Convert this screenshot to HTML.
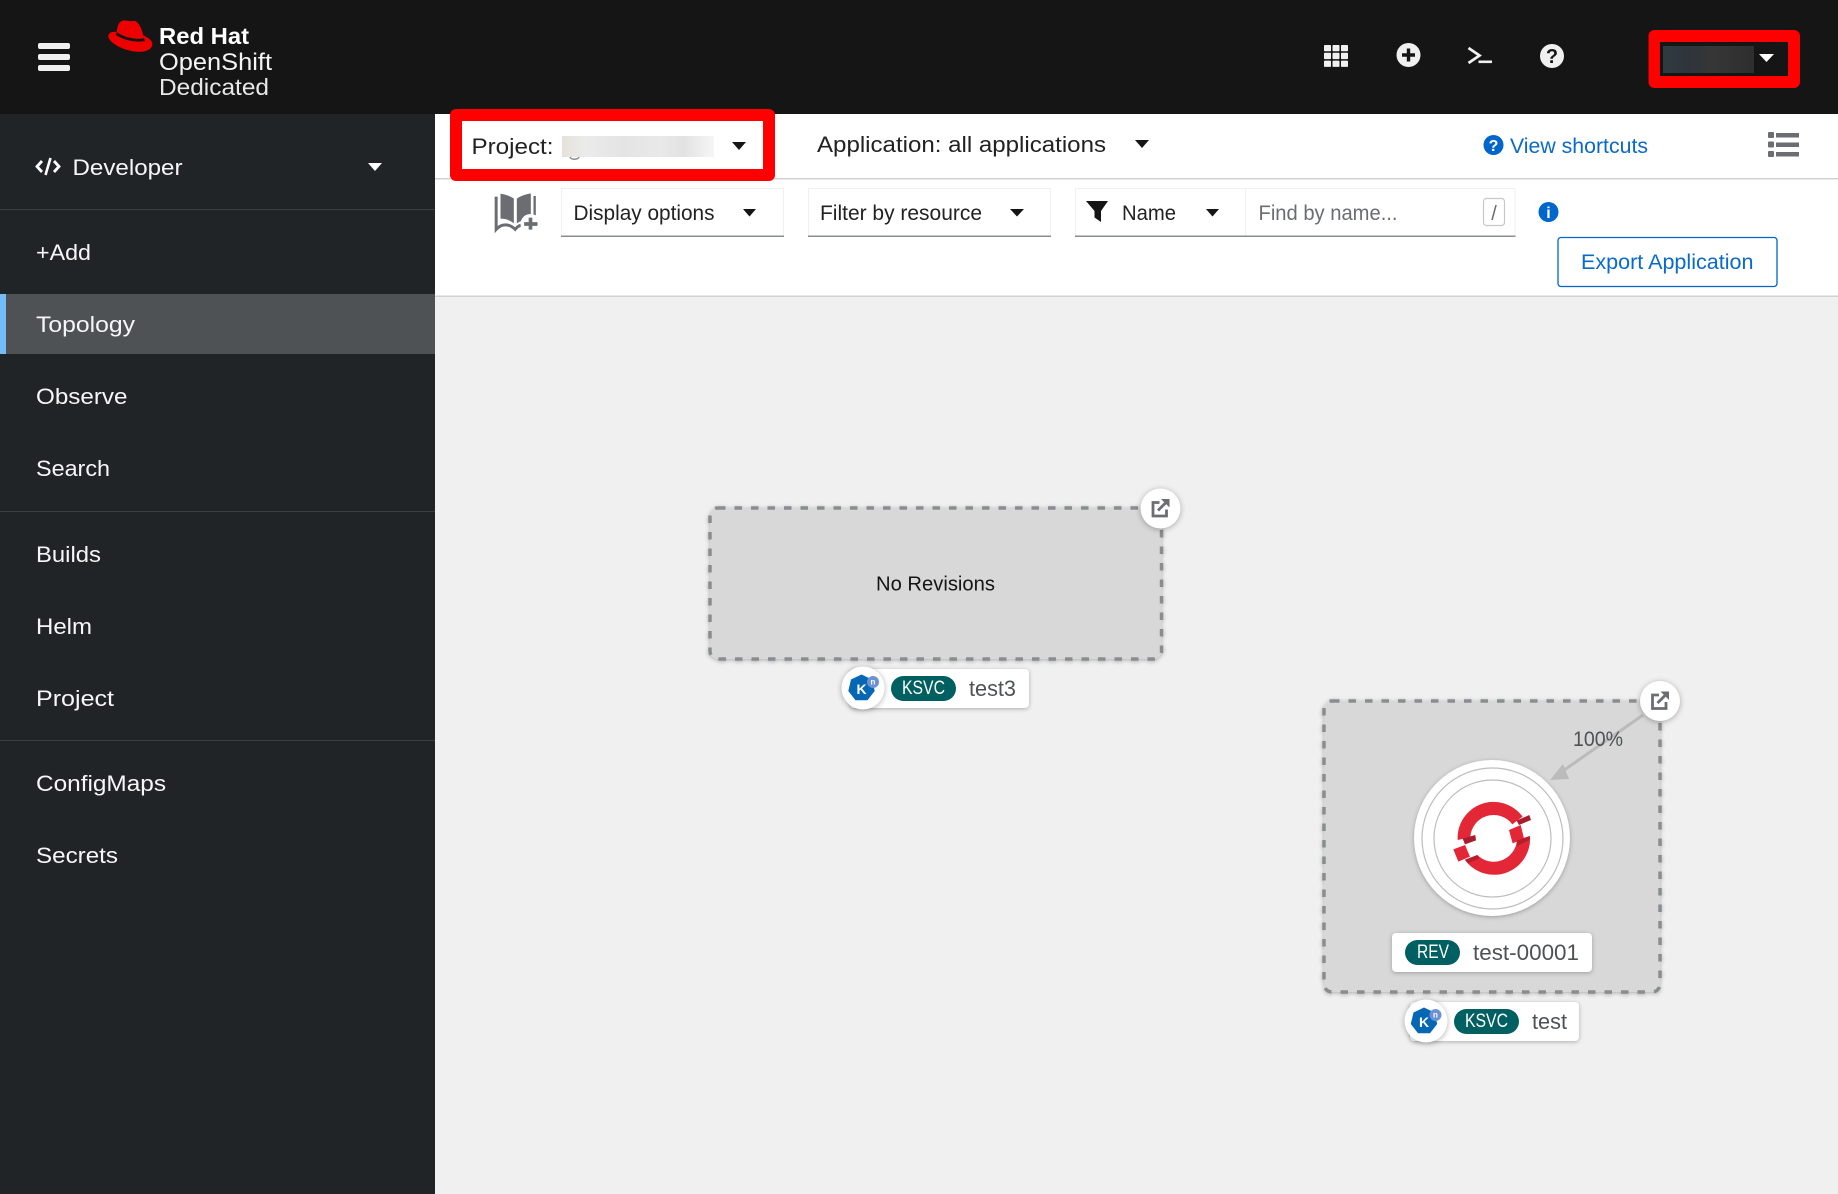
<!DOCTYPE html>
<html lang="en">
<head>
<meta charset="utf-8">
<title>Topology</title>
<style>
html,body{margin:0;padding:0;width:1838px;height:1194px;overflow:hidden;background:#f0f0f0}
svg{display:block;position:absolute;left:0;top:0}
text{font-family:"Liberation Sans",sans-serif}
.nav{fill:#f6f6f6;font-size:22.5px}
.tb{fill:#222;font-size:22.5px}
.sel{fill:#222;font-size:21px}
.blue{fill:#0a6acb;font-size:21.5px}
.pill{fill:#fff;font-size:19px}
.lbl{fill:#4f5255;font-size:22px}
.sh{filter:drop-shadow(0 1px 2px rgba(0,0,0,.28))}
.sh2{filter:drop-shadow(0 1px 3px rgba(0,0,0,.3))}
</style>
</head>
<body>
<svg width="1838" height="1194" viewBox="0 0 1838 1194" xmlns="http://www.w3.org/2000/svg">
<defs>
<linearGradient id="pg" x1="0" x2="1" y1="0" y2="0">
<stop offset="0" stop-color="#e6e0da"/><stop offset=".15" stop-color="#ebebeb"/><stop offset=".4" stop-color="#e4e4e4"/><stop offset=".65" stop-color="#e9e9e9"/><stop offset=".8" stop-color="#e2e2e2"/><stop offset="1" stop-color="#f6f6f6"/>
</linearGradient>
<linearGradient id="ug" x1="0" x2="1" y1="0" y2="0">
<stop offset="0" stop-color="#2e3b42"/><stop offset=".3" stop-color="#30343a"/><stop offset=".55" stop-color="#363636"/><stop offset="1" stop-color="#2e2e2e"/>
</linearGradient>
<g id="ext" fill="none" stroke="#6a6e73">
<path d="M8 3.500H1.500V17H15V10.500" stroke-width="2.800"/>
<path d="M6.500 11.500L15 3" stroke-width="2.800"/>
<path d="M9.500 0H18V8.500Z" fill="#6a6e73" stroke="none"/>
</g>
<g id="kn">
<polygon points="0,-13.500 10.500,-8.500 13.200,3 6,12.200 -6,12.200 -13.200,3 -10.500,-8.500" fill="#0667b5"/>
<text x="0" y="6" text-anchor="middle" font-size="14" font-weight="700" fill="#fff">K</text>
<circle cx="11.500" cy="-6" r="6" fill="#6c92d4"/>
<text x="11.500" y="-3.500" text-anchor="middle" font-size="8" font-weight="700" fill="#fff">n</text>
</g>
</defs>

<!-- backgrounds -->
<rect width="1838" height="1194" fill="#f0f0f0"/>
<rect x="435" y="114" width="1403" height="182" fill="#fff"/>
<rect x="435" y="178" width="1403" height="1.500" fill="#d2d2d2"/>
<rect x="435" y="295.500" width="1403" height="1.500" fill="#d2d2d2"/>

<!-- masthead -->
<rect width="1838" height="114" fill="#151515"/>
<g fill="#f0f0f0">
<rect x="38" y="43" width="32" height="6" rx="2"/>
<rect x="38" y="54" width="32" height="6" rx="2"/>
<rect x="38" y="65" width="32" height="6" rx="2"/>
</g>
<g transform="translate(100,10) scale(.3333)">
<path d="M62,35C72,27 88,36 100,33C113,30 124,52 130,76C147,84 158,92 157,104C156,120 132,128 108,125C70,122 25,98 25,78C25,68 38,63 50,66C52,52 55,40 62,35Z" fill="#ee0000"/>
<path d="M50,66C75,84 110,90 132,84L135,93C105,99 72,90 48,75Z" fill="#151515"/>
</g>
<text x="159" y="44" font-size="23" font-weight="700" fill="#fff" textLength="90" lengthAdjust="spacingAndGlyphs">Red Hat</text>
<text x="159" y="70" font-size="24" fill="#f4f4f4" textLength="113" lengthAdjust="spacingAndGlyphs">OpenShift</text>
<text x="159" y="95" font-size="23" fill="#e8e8e8" textLength="110" lengthAdjust="spacingAndGlyphs">Dedicated</text>

<!-- masthead icons -->
<g fill="#f0f0f0">
<rect x="1324" y="45" width="7" height="6.300" rx=".8"/><rect x="1332.500" y="45" width="7" height="6.300" rx=".8"/><rect x="1341" y="45" width="7" height="6.300" rx=".8"/>
<rect x="1324" y="52.800" width="7" height="6.300" rx=".8"/><rect x="1332.500" y="52.800" width="7" height="6.300" rx=".8"/><rect x="1341" y="52.800" width="7" height="6.300" rx=".8"/>
<rect x="1324" y="60.600" width="7" height="6.300" rx=".8"/><rect x="1332.500" y="60.600" width="7" height="6.300" rx=".8"/><rect x="1341" y="60.600" width="7" height="6.300" rx=".8"/>
<circle cx="1408.500" cy="55" r="12"/>
<circle cx="1552" cy="56" r="12"/>
</g>
<path d="M1402 55h13M1408.500 48.500v13" stroke="#151515" stroke-width="3.400"/>
<path d="M1468.500 48L1479.500 55.500L1468.500 63" fill="none" stroke="#f0f0f0" stroke-width="2.800"/>
<rect x="1478.500" y="60.500" width="13.500" height="2.600" fill="#f0f0f0"/>
<text x="1552" y="63" text-anchor="middle" font-size="20" font-weight="700" fill="#151515">?</text>

<!-- user redaction -->
<rect x="1648.500" y="30" width="151.500" height="58" rx="6" fill="#ff0000"/>
<rect x="1660" y="42" width="128" height="34" fill="#151515"/>
<rect x="1663" y="46" width="91" height="27" fill="url(#ug)"/>
<path d="M1759 54H1774L1766.500 62Z" fill="#fff"/>

<!-- sidebar -->
<rect x="0" y="114" width="435" height="1080" fill="#212427"/>
<rect x="0" y="209" width="435" height="1" fill="#3c3f42"/>
<rect x="0" y="511" width="435" height="1" fill="#3c3f42"/>
<rect x="0" y="740" width="435" height="1" fill="#3c3f42"/>
<rect x="0" y="294" width="435" height="60" fill="#4f5255"/>
<rect x="0" y="294" width="6" height="60" fill="#73bcf7"/>
<path d="M42 161L37 166.500L42 172M54 161L59 166.500L54 172" fill="none" stroke="#fff" stroke-width="2.800"/>
<path d="M50.500 158L45.500 175" fill="none" stroke="#fff" stroke-width="2.600"/>
<text class="nav" x="72.500" y="175" textLength="110" lengthAdjust="spacingAndGlyphs">Developer</text>
<path d="M368 163H382L375 171Z" fill="#fff"/>
<text class="nav" x="36" y="260" textLength="55" lengthAdjust="spacingAndGlyphs">+Add</text>
<text class="nav" x="36" y="332" textLength="99" lengthAdjust="spacingAndGlyphs">Topology</text>
<text class="nav" x="36" y="404" textLength="91.500" lengthAdjust="spacingAndGlyphs">Observe</text>
<text class="nav" x="36" y="476" textLength="74" lengthAdjust="spacingAndGlyphs">Search</text>
<text class="nav" x="36" y="562" textLength="65" lengthAdjust="spacingAndGlyphs">Builds</text>
<text class="nav" x="36" y="634" textLength="56" lengthAdjust="spacingAndGlyphs">Helm</text>
<text class="nav" x="36" y="706" textLength="78" lengthAdjust="spacingAndGlyphs">Project</text>
<text class="nav" x="36" y="791" textLength="130" lengthAdjust="spacingAndGlyphs">ConfigMaps</text>
<text class="nav" x="36" y="863" textLength="82" lengthAdjust="spacingAndGlyphs">Secrets</text>

<!-- project bar -->
<rect x="450" y="109" width="325" height="72" rx="6" fill="#ff0000"/>
<rect x="462" y="121" width="301" height="48" fill="#fff"/>
<text class="tb" x="471.500" y="154" textLength="82" lengthAdjust="spacingAndGlyphs">Project:</text>
<rect x="562" y="136" width="152" height="21" fill="url(#pg)"/>
<path d="M570 157c1 3 8 3 9 0" fill="none" stroke="#8a8d90" stroke-width="1.400"/>
<path d="M732 142H746L739 150Z" fill="#151515"/>
<text class="tb" x="817" y="152" textLength="289" lengthAdjust="spacingAndGlyphs">Application: all applications</text>
<path d="M1135 140H1149L1142 148Z" fill="#151515"/>
<circle cx="1493.500" cy="145" r="10" fill="#0066cc"/>
<text x="1493.500" y="151" text-anchor="middle" font-size="16" font-weight="700" fill="#fff">?</text>
<text class="blue" x="1510" y="153" textLength="138" lengthAdjust="spacingAndGlyphs">View shortcuts</text>
<g fill="#6a6e73">
<rect x="1768" y="132" width="6" height="6" rx="1"/><rect x="1776" y="133" width="23" height="4.500"/>
<rect x="1768" y="141.500" width="6" height="6" rx="1"/><rect x="1776" y="142.500" width="23" height="4.500"/>
<rect x="1768" y="151" width="6" height="6" rx="1"/><rect x="1776" y="152" width="23" height="4.500"/>
</g>

<!-- toolbar row -->
<g transform="translate(480.500,180) scale(.3333)">
<path d="M60,41C76,44 91,49 100,56V130C88,120 74,116 60,116Z" fill="#6a6e73"/>
<path d="M109,56C119,48 135,43 151,40V118C134,118 120,122 109,130Z" fill="#6a6e73"/>
<path d="M47,50V148C65,128 88,132 104,148C112,138 122,134 132,134" fill="none" stroke="#6a6e73" stroke-width="9"/>
<rect x="159" y="48" width="7" height="58" fill="#6a6e73"/>
<circle cx="150" cy="132" r="30" fill="#fff"/>
<path d="M131,132H171M150,113V149" stroke="#6a6e73" stroke-width="11"/>
</g>
<rect x="561.500" y="188.500" width="222" height="48" fill="#fff" stroke="#f0f0f0"/>
<rect x="561" y="235.500" width="223" height="1.500" fill="#8a8d90"/>
<text class="sel" x="573.500" y="220" textLength="141" lengthAdjust="spacingAndGlyphs">Display options</text>
<path d="M743 209H756L749.500 216.500Z" fill="#151515"/>
<rect x="808.500" y="188.500" width="242" height="48" fill="#fff" stroke="#f0f0f0"/>
<rect x="808" y="235.500" width="243" height="1.500" fill="#8a8d90"/>
<text class="sel" x="820" y="220" textLength="162" lengthAdjust="spacingAndGlyphs">Filter by resource</text>
<path d="M1010 209H1024L1017 216.500Z" fill="#151515"/>
<rect x="1075.500" y="188.500" width="439.500" height="48" fill="#fff" stroke="#f0f0f0"/>
<rect x="1245" y="188" width="1" height="48" fill="#f0f0f0"/>
<rect x="1075" y="235.500" width="440.500" height="1.500" fill="#8a8d90"/>
<path d="M1086 201H1108L1101 211V222L1094.500 217.500V211Z" fill="#151515"/>
<text class="sel" x="1122" y="220" textLength="54" lengthAdjust="spacingAndGlyphs">Name</text>
<path d="M1206 209H1219L1212.500 216.500Z" fill="#151515"/>
<text class="sel" x="1258.500" y="220" textLength="139" lengthAdjust="spacingAndGlyphs" style="fill:#6a6e73">Find by name...</text>
<rect x="1483.500" y="198.500" width="21" height="27" rx="3" fill="#fff" stroke="#c6c7c8" stroke-width="1.200"/>
<text x="1494" y="220" text-anchor="middle" font-size="20" fill="#6a6e73">/</text>
<circle cx="1548.500" cy="212" r="10" fill="#0066cc"/>
<text x="1548.500" y="218" text-anchor="middle" font-size="16" font-weight="700" fill="#fff">i</text>
<rect x="1558" y="237.500" width="219" height="49" rx="3" fill="#fff" stroke="#0066cc" stroke-width="1.300"/>
<text class="blue" x="1581" y="269" textLength="172.500" lengthAdjust="spacingAndGlyphs">Export Application</text>

<!-- node: test3 -->
<rect class="sh" x="710" y="508" width="451.500" height="151" rx="8" fill="#d8d8d8" stroke="#8a8d90" stroke-width="3.500" stroke-dasharray="7.500 9"/>
<text x="876" y="590.500" font-size="20.500" fill="#151515" textLength="119" lengthAdjust="spacingAndGlyphs">No Revisions</text>
<circle class="sh2" cx="1160.500" cy="508.500" r="20" fill="#fff"/>
<use href="#ext" x="1151.500" y="499"/>
<rect class="sh" x="850" y="669" width="179" height="39" rx="4" fill="#fff"/>
<circle class="sh2" cx="863" cy="688" r="21.500" fill="#fff"/>
<use href="#kn" x="861.500" y="688"/>
<rect x="891" y="676" width="65" height="25" rx="12.500" fill="#005f60"/>
<text class="pill" x="902" y="694" textLength="43" lengthAdjust="spacingAndGlyphs">KSVC</text>
<text class="lbl" x="969" y="696" textLength="47" lengthAdjust="spacingAndGlyphs">test3</text>

<!-- node: test -->
<rect class="sh" x="1324" y="701" width="336" height="291" rx="8" fill="#d8d8d8" stroke="#8a8d90" stroke-width="3.500" stroke-dasharray="7.500 9"/>
<path d="M1643 715L1560 773" stroke="#bbbbbb" stroke-width="3"/>
<path d="M1550 780L1563 764L1569 779Z" fill="#bbbbbb"/>
<text x="1573" y="746" font-size="21" fill="#4f5255" textLength="50" lengthAdjust="spacingAndGlyphs">100%</text>
<circle class="sh2" cx="1660" cy="701" r="20" fill="#fff"/>
<use href="#ext" x="1651" y="691.500"/>
<circle class="sh" cx="1492" cy="838" r="78" fill="#fff"/>
<circle cx="1492.500" cy="838.500" r="70.500" fill="none" stroke="#bdbdbd" stroke-width="1.200"/>
<circle cx="1492.500" cy="838.500" r="58.500" fill="none" stroke="#bdbdbd" stroke-width="1.200"/>
<g transform="translate(1400,760) scale(.3333)">
<path d="M173,240A108,108 0 0 1 368,170L350,183L337,193A70,70 0 0 0 211,232Z" fill="#e32736"/>
<path d="M390,228A108,108 0 0 1 195,300L232,285A70,70 0 0 0 351,240Z" fill="#e32736"/>
<polygon points="327,210 362,195 372,235 338,250" fill="#e32736"/>
<polygon points="160,268 195,255 210,290 175,305" fill="#e32736"/>
<polygon points="188,236 226,225 228,241 195,253" fill="#a81c2b"/>
<polygon points="350,182 388,165 393,180 357,195" fill="#a81c2b"/>
<polygon points="350,242 390,228 388,240 352,258" fill="#b51f2d"/>
<polygon points="195,299 232,285 238,295 205,310" fill="#b51f2d"/>
</g>
<rect class="sh" x="1392" y="933" width="200" height="39" rx="4" fill="#fff"/>
<rect x="1405" y="940" width="55" height="25" rx="12.500" fill="#005f60"/>
<text class="pill" x="1417" y="958" textLength="32" lengthAdjust="spacingAndGlyphs">REV</text>
<text class="lbl" x="1473" y="960" textLength="106" lengthAdjust="spacingAndGlyphs">test-00001</text>
<rect class="sh" x="1410" y="1002" width="169" height="39" rx="4" fill="#fff"/>
<circle class="sh2" cx="1426" cy="1021" r="21.500" fill="#fff"/>
<use href="#kn" x="1424" y="1021"/>
<rect x="1454" y="1009" width="65" height="25" rx="12.500" fill="#005f60"/>
<text class="pill" x="1465" y="1027" textLength="43" lengthAdjust="spacingAndGlyphs">KSVC</text>
<text class="lbl" x="1532" y="1029" textLength="35" lengthAdjust="spacingAndGlyphs">test</text>
</svg>
</body>
</html>
